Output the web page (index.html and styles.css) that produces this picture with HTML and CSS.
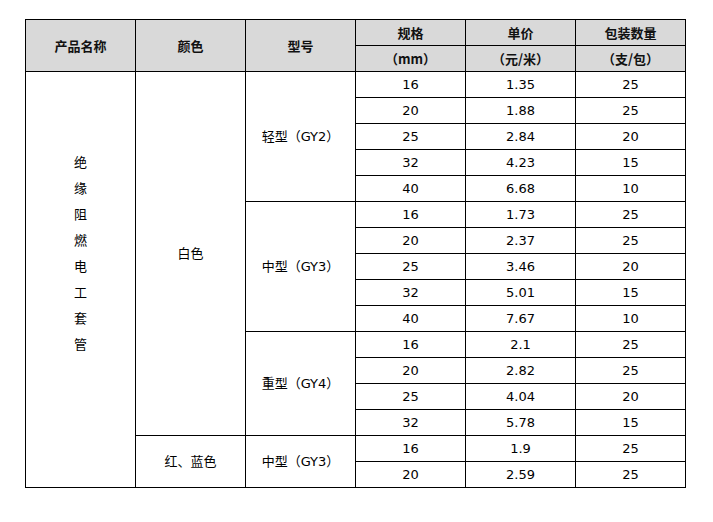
FILE: index.html
```html
<!DOCTYPE html>
<html lang="zh">
<head>
<meta charset="utf-8">
<link rel="stylesheet" href="styles.css">
</head>
<body>
<table class="spec">
  <colgroup>
    <col class="c"><col class="c"><col class="c"><col class="c"><col class="c"><col class="c">
  </colgroup>
  <thead>
    <tr>
      <th rowspan="2">产品名称</th>
      <th rowspan="2">颜色</th>
      <th rowspan="2">型号</th>
      <th>规格</th>
      <th>单价</th>
      <th>包装数量</th>
    </tr>
    <tr>
      <th>（mm）</th>
      <th>（元/米）</th>
      <th>（支/包）</th>
    </tr>
  </thead>
  <tbody>
    <tr>
      <td rowspan="16" class="vert">绝<br>缘<br>阻<br>燃<br>电<br>工<br>套<br>管</td>
      <td rowspan="14">白色</td>
      <td rowspan="5">轻型（GY2）</td>
      <td class="n">16</td><td class="n">1.35</td><td class="n">25</td>
    </tr>
    <tr><td class="n">20</td><td class="n">1.88</td><td class="n">25</td></tr>
    <tr><td class="n">25</td><td class="n">2.84</td><td class="n">20</td></tr>
    <tr><td class="n">32</td><td class="n">4.23</td><td class="n">15</td></tr>
    <tr><td class="n">40</td><td class="n">6.68</td><td class="n">10</td></tr>
    <tr>
      <td rowspan="5">中型（GY3）</td>
      <td class="n">16</td><td class="n">1.73</td><td class="n">25</td>
    </tr>
    <tr><td class="n">20</td><td class="n">2.37</td><td class="n">25</td></tr>
    <tr><td class="n">25</td><td class="n">3.46</td><td class="n">20</td></tr>
    <tr><td class="n">32</td><td class="n">5.01</td><td class="n">15</td></tr>
    <tr><td class="n">40</td><td class="n">7.67</td><td class="n">10</td></tr>
    <tr>
      <td rowspan="4">重型（GY4）</td>
      <td class="n">16</td><td class="n">2.1</td><td class="n">25</td>
    </tr>
    <tr><td class="n">20</td><td class="n">2.82</td><td class="n">25</td></tr>
    <tr><td class="n">25</td><td class="n">4.04</td><td class="n">20</td></tr>
    <tr><td class="n">32</td><td class="n">5.78</td><td class="n">15</td></tr>
    <tr>
      <td rowspan="2">红、蓝色</td>
      <td rowspan="2">中型（GY3）</td>
      <td class="n">16</td><td class="n">1.9</td><td class="n">25</td>
    </tr>
    <tr><td class="n">20</td><td class="n">2.59</td><td class="n">25</td></tr>
  </tbody>
</table>
</body>
</html>
```

FILE: styles.css
```css
html, body {
  margin: 0;
  padding: 0;
  background: #ffffff;
}

body {
  padding: 19px 0 0 25px;
  font-family: "DejaVu Sans", "Noto Sans CJK SC", sans-serif;
  color: #000000;
}

.spec {
  border-collapse: collapse;
  table-layout: fixed;
  width: 661px;
}

.spec .c {
  width: 110px;
}

.spec th,
.spec td {
  border: 1px solid #000000;
  padding: 0;
  height: 25px;
  text-align: center;
  vertical-align: middle;
  font-size: 13px;
  line-height: 16px;
}

.spec th {
  background: #d9d9d9;
  font-family: "Noto Sans CJK SC", sans-serif;
  font-weight: 700;
  color: #111111;
}

.spec td {
  font-family: "DejaVu Sans", "Noto Sans CJK SC", sans-serif;
}

.spec td.n {
  font-family: "DejaVu Sans", sans-serif;
  font-size: 13px;
}

.spec td.vert {
  line-height: 26px;
  padding-bottom: 52px;
}
```
